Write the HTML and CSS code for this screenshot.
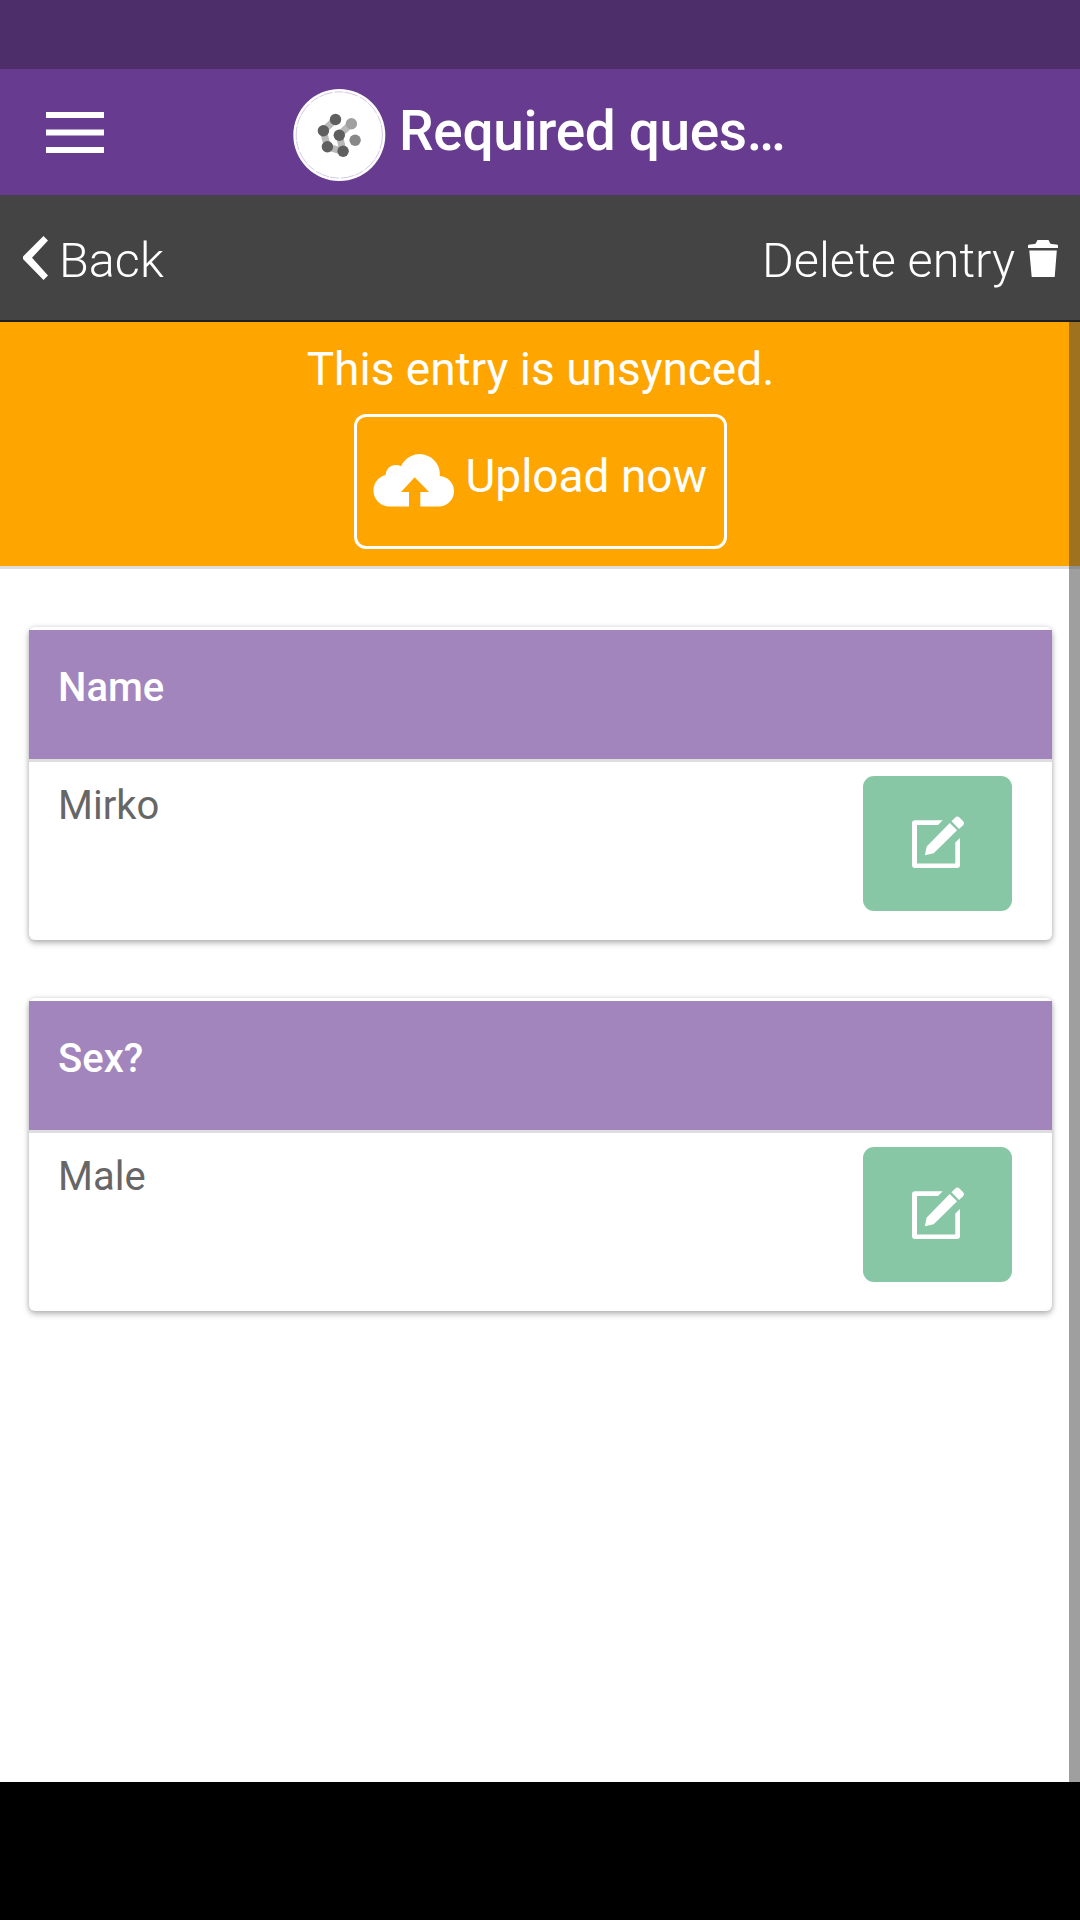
FILE: index.html
```html
<!DOCTYPE html>
<html lang="en">
<head>
<meta charset="utf-8">
<title>Required questions</title>
<link rel="stylesheet" href="styles.css">
</head>
<body>
<div class="status-bar"></div>
<header class="header">
  <svg class="menu-icon" viewBox="0 0 58 41" fill="#fff"><path d="M0 0h58v6H0zM0 17.5h58v6H0zM0 35h58v6H0z"/></svg>
  <svg class="logo" viewBox="-.3 0 92 92">
    <circle cx="46" cy="46" r="46" fill="#fff"/>
    <circle cx="46" cy="46" r="43.1" fill="none" stroke="#cbb9dc" stroke-width=".8" stroke-dasharray="14 2 9 1"/>
    <g fill="none" stroke="#b9b9b9" stroke-width="7">
      <path d="M42 30.500 30 41.800 34.200 58 49.700 62.300"/>
      <path d="M58 34.500 46 46 49.700 62.300"/>
    </g>
    <g fill="#5f5f5f"><circle cx="42.200" cy="30.500" r="5.700"/><circle cx="30.100" cy="41.700" r="5.700"/><circle cx="46" cy="46.200" r="5.700"/><circle cx="34.100" cy="57.800" r="5.700"/><circle cx="49.800" cy="62.200" r="5.700"/></g>
    <circle cx="58.100" cy="34.700" r="5.700" fill="#a0a0a0"/>
    <circle cx="61.800" cy="51.300" r="5.700" fill="#888"/>
  </svg>
  <h1 class="title">Required ques…</h1>
</header>
<nav class="toolbar">
  <a class="tool">
    <svg class="back-icon" viewBox="0 0 25 44" fill="#fff"><path d="M20.500 0 0 20.500V23L20.500 44 25 39.500 9 21.800 25 4.500z"/></svg>
    <span>Back</span>
  </a>
  <a class="tool">
    <span class="delete-label">Delete entry</span>
    <svg class="trash-icon" viewBox="0 0 30 37" fill="#fff"><path d="M0 8V5.500Q0 4.500 2 4.400L6.500 4Q8 3.800 8.300 2.500L9 .700Q9.200 0 10 0H20Q20.800 0 21 .700L21.700 2.500Q22 3.800 23.500 4L28 4.400Q30 4.500 30 5.500V8zM1.300 10.600H28.800L26.700 37H3.700z"/></svg>
  </a>
</nav>
<main class="content">
  <section class="notice">
    <p class="notice-text">This entry is unsynced.</p>
    <button class="upload">
      <svg class="cloud-icon" viewBox="0 0 81 52.500" fill="#fff"><path d="M16 52.500A16 16 0 0 1 11.500 21 10.500 10.500 0 0 1 27 12.200 20.300 20.300 0 0 1 65.800 22A15.300 15.300 0 0 1 66 52.500H46.300V38H55L40.700 23.200 27 38H35V52.500z"/></svg>
      <span class="upload-label">Upload now</span>
    </button>
  </section>
  <section class="cards">
    <article class="card">
      <h2 class="question">Name</h2>
      <div class="answer">
        <span class="value">Mirko</span>
        <button class="edit"><svg class="edit-icon" viewBox="0 0 53 52" fill="#fff"><path d="M30.700 4.300H3Q0 4.300 0 7.300V49Q0 52 3 52H45Q48 52 48 49V22L43.300 26.500V47.500H5V9H26z"/><path d="M37.700 7 14.700 30.500 12.900 39.200 21.700 37.300 45.100 14.200zM39.500 5.300 43.300 1.500Q45.200-.500 47.200 1.300L51.200 5.300Q53 7.200 51.200 9.200L47 13z"/></svg></button>
      </div>
    </article>
    <article class="card">
      <h2 class="question">Sex?</h2>
      <div class="answer">
        <span class="value">Male</span>
        <button class="edit"><svg class="edit-icon" viewBox="0 0 53 52" fill="#fff"><path d="M30.700 4.300H3Q0 4.300 0 7.300V49Q0 52 3 52H45Q48 52 48 49V22L43.300 26.500V47.500H5V9H26z"/><path d="M37.700 7 14.700 30.500 12.900 39.200 21.700 37.300 45.100 14.200zM39.500 5.300 43.300 1.500Q45.200-.500 47.200 1.300L51.200 5.300Q53 7.200 51.200 9.200L47 13z"/></svg></button>
      </div>
    </article>
  </section>
  <div class="scrollbar"></div>
</main>
<footer class="nav-bar"></footer>
</body>
</html>
```
FILE: styles.css
```css
* { box-sizing: border-box; }
body {
  margin: 0;
  height: 1920px;
  display: flex;
  flex-direction: column;
  font-family: Roboto, "Liberation Sans", sans-serif;
  color: #fff;
  background: #fff;
  overflow: hidden;
}
svg { display: block; flex: none; overflow: visible; }
h1, h2, p { margin: 0; }
button { font: inherit; color: inherit; padding: 0; }
.status-bar { height: 69px; background: #4e2d6b; }
.header {
  height: 126px;
  display: flex;
  align-items: flex-start;
  padding: 20px 46px 0;
  background: #673b8f;
}
.menu-icon { width: 58px; height: 41px; margin-top: 23px; }
.logo { width: 92px; height: 92px; margin-left: 189px; }
.title {
  margin: 12px 0 0 14px;
  font-size: 55px;
  line-height: 60px;
  font-weight: 500;
  letter-spacing: -.350px;
  white-space: nowrap;
}
.toolbar {
  height: 127px;
  display: flex;
  justify-content: space-between;
  padding: 45px 22px 0 23px;
  background: #444;
  border-bottom: 2px solid #1f1f1f;
  font-size: 48.600px;
  line-height: 41px;
  font-weight: 300;
}
.tool { display: flex; align-items: flex-start; white-space: nowrap; }
.back-icon { width: 25px; height: 44px; margin: -4px 11px 0 0; }
.delete-label { margin-right: 13px; }
.trash-icon { width: 30px; height: 37px; }
.content { position: relative; height: 1460px; background: #fff; }
.notice {
  height: 247px;
  display: flex;
  flex-direction: column;
  align-items: center;
  padding: 17px 0 0 1px;
  background: #ffa500;
  border-bottom: 3px solid #dedede;
}
.notice-text { font-size: 46px; line-height: 60px; }
.upload {
  width: 373px;
  height: 135px;
  margin-top: 15px;
  padding: 37px 0 0 16.500px;
  display: flex;
  align-items: flex-start;
  background: transparent;
  border: 3px solid #fff;
  border-radius: 12px;
  font-size: 46px;
  line-height: 44px;
  white-space: nowrap;
}
.cloud-icon { width: 81px; height: 52.500px; }
.upload-label { margin-left: 11px; }
.cards {
  display: flex;
  flex-direction: column;
  gap: 58px;
  padding: 58px 28px 0 29px;
}
.card {
  height: 313px;
  padding-top: 2.500px;
  background: #fff;
  border-radius: 6px;
  box-shadow: 0 3px 6px rgba(0, 0, 0, .27), 0 0 5px rgba(0, 0, 0, .12);
}
.question {
  height: 132px;
  padding: 28px 29px 0;
  background: #a385bd;
  border-bottom: 3px solid #dedede;
  font-size: 40px;
  line-height: 60px;
  font-weight: 500;
}
.answer {
  display: flex;
  justify-content: space-between;
  align-items: flex-start;
  padding: 14.500px 40px 0 29px;
}
.value { color: #666; font-size: 40px; line-height: 60px; }
.edit {
  width: 149px;
  height: 135px;
  display: flex;
  align-items: flex-start;
  padding: 40px 0 0 49px;
  background: #88c7a6;
  border: 0;
  border-radius: 11px;
}
.edit-icon { width: 53px; height: 52px; }
.scrollbar {
  position: absolute;
  top: 0;
  right: 0;
  width: 11px;
  height: 100%;
  background: rgba(64, 64, 64, .5);
}
.nav-bar { height: 138px; background: #000; }
```
